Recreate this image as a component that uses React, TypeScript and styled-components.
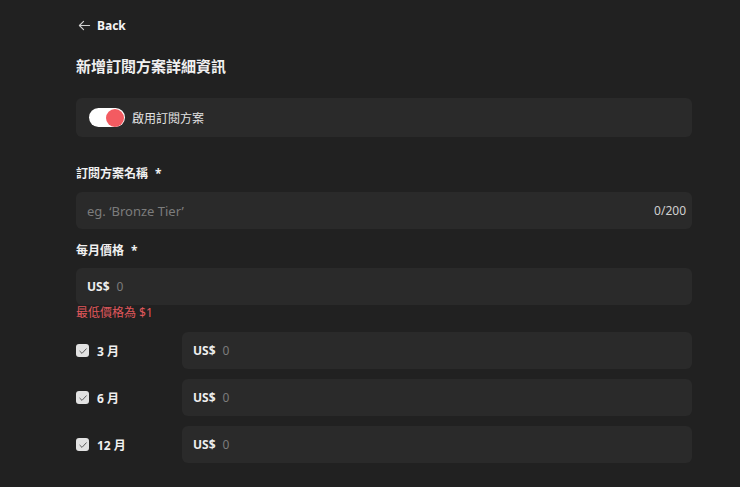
import React from 'react';
import styled, { createGlobalStyle } from 'styled-components';

const GlobalStyle = createGlobalStyle`
  html, body {
    margin: 0;
    background: #212121;
  }
  body {
    font-family: 'Noto Sans', 'Noto Sans CJK TC', sans-serif;
    color: #f2f2f2;
  }
  * {
    box-sizing: border-box;
  }
`;

const Page = styled.div`
  width: 692px;
  padding: 16px 0 24px 76px;
  display: flex;
  flex-direction: column;
`;

const BackLink = styled.a`
  display: flex;
  align-items: center;
  gap: 6px;
  height: 18px;
  margin-left: 2px;
  font-size: 12px;
  font-weight: 700;
  color: #f5f5f5;
  cursor: pointer;
`;

const Title = styled.h1`
  margin: 20px 0 0;
  font-size: 15px;
  line-height: 24px;
  font-weight: 700;
  color: #f0f0f0;
`;

const ToggleCard = styled.div`
  margin-top: 20px;
  height: 39px;
  display: flex;
  align-items: center;
  gap: 7px;
  padding: 0 13px;
  background: #2a2a2a;
  border-radius: 6px;
  font-size: 12px;
  color: #e4e4e4;
`;

const Toggle = styled.span`
  position: relative;
  width: 36px;
  height: 19px;
  border-radius: 10px;
  background: #ffffff;
  &:after {
    content: '';
    position: absolute;
    right: 1px;
    top: 0.5px;
    width: 18px;
    height: 18px;
    border-radius: 50%;
    background: #f35b61;
  }
`;

const Label = styled.label<{ $top: number }>`
  margin-top: ${p => p.$top}px;
  height: 18px;
  line-height: 18px;
  font-size: 12px;
  font-weight: 700;
  color: #f0f0f0;
  span {
    margin-left: 7px;
  }
`;

const Field = styled.div<{ $top?: number }>`
  margin-top: ${p => p.$top ?? 0}px;
  width: 100%;
  height: 37px;
  display: flex;
  align-items: center;
  padding: 0 6px 0 11px;
  background: #2a2a2a;
  border-radius: 6px;
  font-size: 12px;
`;

const Placeholder = styled.span<{ $size?: number }>`
  flex: 1;
  font-size: ${p => p.$size ?? 12}px;
  color: #7c7c7c;
`;

const Counter = styled.span`
  color: #d0d0d0;
`;

const Currency = styled.span`
  font-weight: 700;
  color: #eeeeee;
  margin-right: 7px;
`;

const ErrorText = styled.div`
  height: 16px;
  line-height: 16px;
  font-size: 12px;
  color: #e0585c;
`;

const Periods = styled.div`
  margin-top: 11px;
  display: flex;
  flex-direction: column;
  gap: 10px;
`;

const PeriodRow = styled.div`
  display: grid;
  grid-template-columns: 106px 1fr;
  align-items: center;
`;

const PeriodLabel = styled.div`
  display: flex;
  align-items: center;
  gap: 8px;
  font-size: 12px;
  font-weight: 700;
  color: #f0f0f0;
`;

const Check = styled.span`
  width: 13px;
  height: 13px;
  border-radius: 3px;
  background: #e2e2e2;
  display: flex;
  align-items: center;
  justify-content: center;
`;

const PriceField = ({ top }: { top?: number }) => (
  <Field $top={top}>
    <Currency>US$</Currency>
    <Placeholder>0</Placeholder>
  </Field>
);

const periods = ['3 月', '6 月', '12 月'];

const App = () => (
  <>
    <GlobalStyle />
    <Page>
      <BackLink>
        <svg width="13" height="13" viewBox="0 0 14 14" fill="none" stroke="#cfcfcf" strokeWidth="1.2" strokeLinecap="round" strokeLinejoin="round">
          <path d="M12.5 7H1.5M6 2.5L1.5 7L6 11.5" />
        </svg>
        Back
      </BackLink>
      <Title>新增訂閱方案詳細資訊</Title>
      <ToggleCard>
        <Toggle />
        啟用訂閱方案
      </ToggleCard>
      <Label $top={28}>訂閱方案名稱<span>*</span></Label>
      <Field $top={9}>
        <Placeholder $size={13}>eg. ‘Bronze Tier’</Placeholder>
        <Counter>0/200</Counter>
      </Field>
      <Label $top={13}>每月價格<span>*</span></Label>
      <PriceField top={8} />
      <ErrorText>最低價格為 $1</ErrorText>
      <Periods>
        {periods.map(p => (
          <PeriodRow key={p}>
            <PeriodLabel>
              <Check>
                <svg width="10" height="10" viewBox="0 0 10 10" fill="none" stroke="#5a5a5a" strokeWidth="1" strokeLinecap="round" strokeLinejoin="round">
                  <path d="M1.8 5.2L4 7.4L8.3 2.8" />
                </svg>
              </Check>
              {p}
            </PeriodLabel>
            <PriceField />
          </PeriodRow>
        ))}
      </Periods>
    </Page>
  </>
);

export default App;
